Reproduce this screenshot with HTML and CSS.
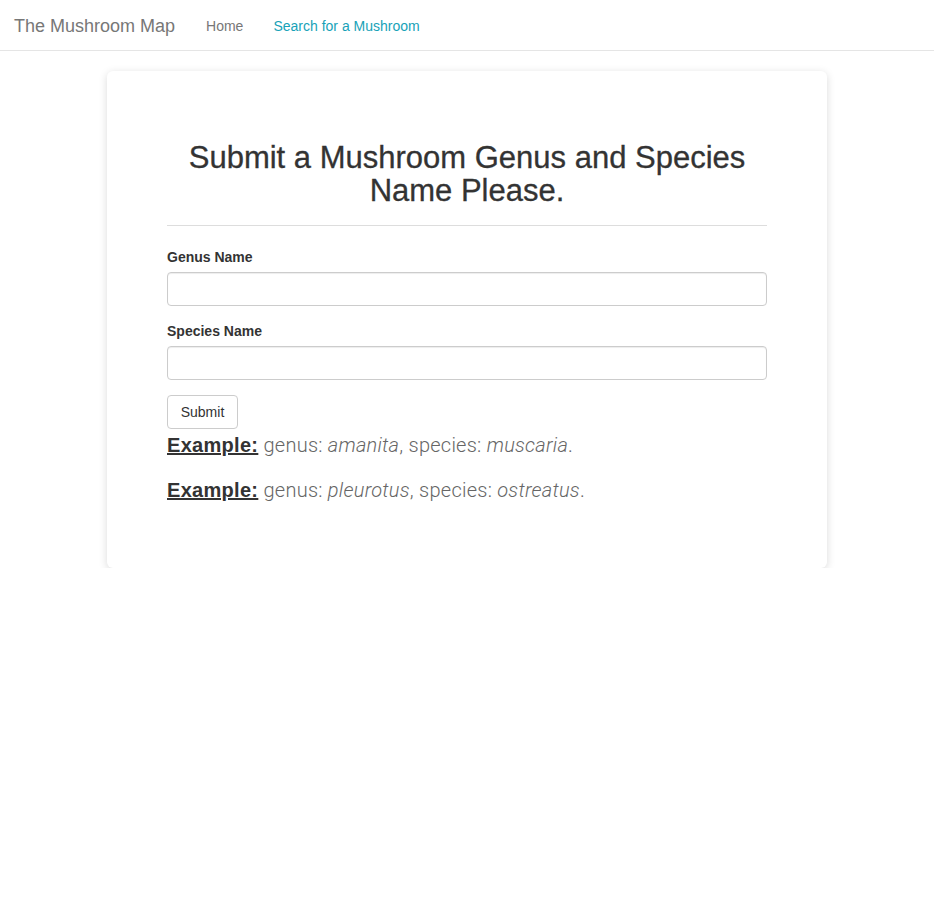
FILE: index.html
```html
<!DOCTYPE html>
<html>
<head>
<meta charset="utf-8">
<link rel="stylesheet" href="styles.css">
</head>
<body>
<nav class="navbar">
  <a class="brand" href="#">The Mushroom Map</a>
  <ul class="nav-links">
    <li><a href="#" class="nav-link">Home</a></li>
    <li><a href="#" class="nav-link active">Search for a Mushroom</a></li>
  </ul>
</nav>
<main class="card">
  <h2 class="title">Submit a Mushroom Genus and Species Name Please.</h2>
  <hr class="divider">
  <form class="form">
    <div class="form-group">
      <label class="label" for="genus">Genus Name</label>
      <input class="input" id="genus" type="text">
    </div>
    <div class="form-group">
      <label class="label" for="species">Species Name</label>
      <input class="input" id="species" type="text">
    </div>
    <button class="btn" type="button">Submit</button>
  </form>
  <p class="example"><strong class="ex-label">Example:</strong> genus: <em>amanita</em>, species: <em>muscaria</em>.</p>
  <p class="example"><strong class="ex-label">Example:</strong> genus: <em>pleurotus</em>, species: <em>ostreatus</em>.</p>
</main>
</body>
</html>
```
FILE: styles.css
```css
* { box-sizing: border-box; }
html, body { margin: 0; padding: 0; background: #fff; }
body {
  font-family: "Liberation Sans", Arial, sans-serif;
  font-size: 14px;
  line-height: 1.42857;
  color: #333;
}
.navbar {
  height: 51px;
  border-bottom: 1px solid #e5e5e5;
  display: flex;
  align-items: center;
  padding: 2px 0 0 14px;
}
.brand {
  font-size: 18px;
  color: #777;
  text-decoration: none;
  line-height: 20px;
  margin-right: 30px;
}
.nav-links {
  list-style: none;
  margin: 0;
  padding: 0 0 0 1px;
  display: flex;
  gap: 30px;
}
.nav-link {
  font-size: 14px;
  color: #777;
  text-decoration: none;
  line-height: 20px;
}
.nav-link.active { color: #17a2b8; }
.card {
  width: 720px;
  margin: 20px auto 0;
  padding: 70px 60px 64px;
  border-radius: 6px;
  box-shadow: 0 2px 8px rgba(0,0,0,0.15);
  background: #fff;
}
.title {
  margin: 0;
  font-family: "Liberation Sans", Arial, sans-serif;
  font-size: 31px;
  line-height: 33px;
  font-weight: normal;
  -webkit-text-stroke: 0.3px #333;
  text-align: center;
  color: #333;
}
.divider {
  margin: 18px 0 21px;
  border: 0;
  border-top: 1px solid #ddd;
}
.form-group { margin-bottom: 15px; display: flex; flex-direction: column; }
.label {
  font-weight: bold;
  margin-bottom: 5px;
  line-height: 20px;
}
.input {
  height: 34px;
  width: 100%;
  border: 1px solid #ccc;
  border-radius: 4px;
  box-shadow: inset 0 1px 1px rgba(0,0,0,0.075);
  font: inherit;
  padding: 6px 12px;
}
.btn {
  height: 34px;
  width: 71px;
  border: 1px solid #ccc;
  border-radius: 4px;
  background: #fff;
  color: #333;
  font-family: "Liberation Sans", Arial, sans-serif;
  font-size: 14px;
  padding: 6px 12px;
  display: block;
}
.example {
  margin: 2px 0 17px;
  font-size: 20px;
  line-height: 28px;
  color: #666;
  font-family: "Roboto", "Liberation Sans", sans-serif;
  font-weight: 300;
  letter-spacing: 0.25px;
}
.example:last-child { margin-bottom: 0; }
.ex-label {
  font-family: "Liberation Sans", Arial, sans-serif;
  font-weight: bold;
  color: #333;
  text-decoration: underline;
  letter-spacing: 0.3px;
}
.example em { font-style: italic; }
```
